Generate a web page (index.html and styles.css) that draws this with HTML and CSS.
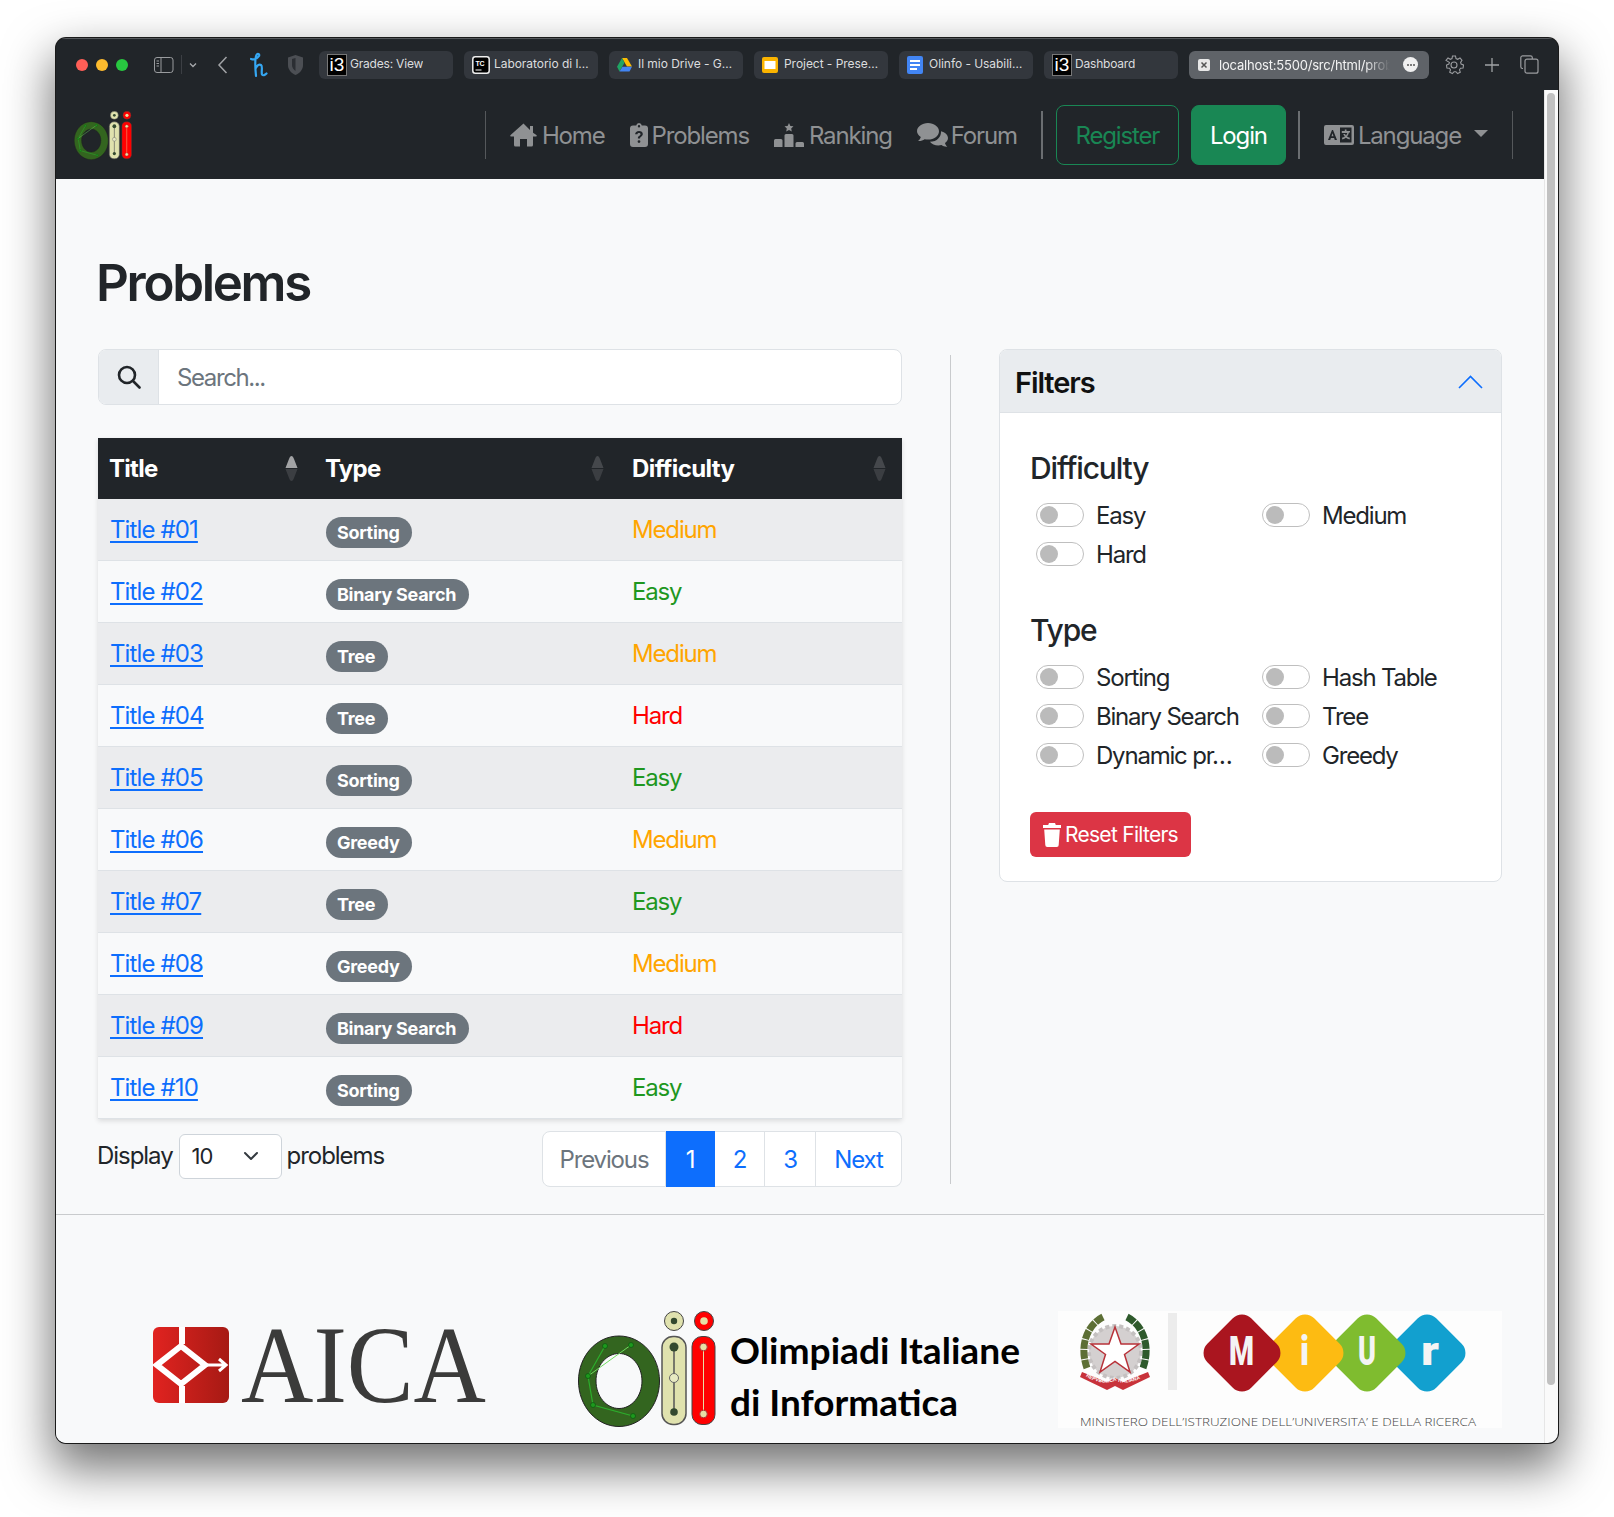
FILE: index.html
```html
<!DOCTYPE html>
<html lang="en">
<head>
<meta charset="utf-8">
<title>Problems</title>
<link rel="stylesheet" href="styles.css">
</head>
<body>
<svg class="defs" width="0" height="0">
  <symbol id="oii" viewBox="0 0 138 116">
    <path fill="#33651f" stroke="#222" fill-rule="evenodd" d="M41 25C18.500 25 .500 45 .500 70s18 45.500 40.500 45.500S81.500 95 81.500 70 63.500 25 41 25zM41 42.500c12.700 0 23 12.300 23 27.500S53.700 97.500 41 97.500 18 85.200 18 70s10.300-27.500 23-27.500z"/>
    <path fill="none" stroke="#2cae2c" stroke-width="1.200" d="M27 35 10 65l5 29 40 11"/>
    <path fill="none" stroke="#6fdc5f" stroke-width="1" d="M10 65 53 34"/>
    <g fill="#1d9a1d" stroke="#0f5a12" stroke-width=".8"><circle cx="27" cy="35" r="2.500"/><circle cx="53" cy="34" r="2.500"/><circle cx="10" cy="65" r="2.500"/><circle cx="15" cy="94" r="2.500"/><circle cx="55" cy="105" r="2.500"/></g>
    <circle cx="96" cy="10" r="9.500" fill="#e0e2ae" stroke="#444"/><circle cx="96" cy="10" r="3.200" fill="#33492f"/>
    <rect x="84" y="25.500" width="24" height="88" rx="11" fill="#e0e2ae" stroke="#555" stroke-width="1.500"/>
    <path stroke="#555" stroke-width="1.500" d="M96 36v65"/>
    <circle cx="96" cy="36" r="4.500" fill="#33492f"/><circle cx="96" cy="67" r="4.500" fill="#e8eac2" stroke="#666"/><circle cx="96" cy="101" r="3.800" fill="#33492f"/>
    <circle cx="126" cy="10" r="9.500" fill="#f00" stroke="#444"/><circle cx="126" cy="10" r="3.800" fill="#e6dfa6"/>
    <rect x="114" y="25.500" width="23" height="88" rx="10" fill="#f00" stroke="#444" stroke-width="1"/>
    <path stroke="#e6dfa6" stroke-width="1" d="M125.500 36v67"/>
    <circle cx="125.500" cy="36" r="3.800" fill="#e6dfa6" stroke="#a33"/><circle cx="125.500" cy="103" r="3.800" fill="#e6dfa6" stroke="#a33"/>
  </symbol>
  <symbol id="sort" viewBox="0 0 13 25">
    <path d="M6.500 0C7.500 0 8.300 1 9 3l3.500 9H.5L4 3C4.700 1 5.500 0 6.500 0z"/>
  </symbol>
  <linearGradient id="aicared" x1="0" x2="1" y1="0" y2="0"><stop offset="0" stop-color="#e12320"/><stop offset="1" stop-color="#a61a14"/></linearGradient>
</svg>

<div class="desktop">
  <div class="window">
    <header class="toolbar">
      <div class="lights"><span class="light light-red"></span><span class="light light-yellow"></span><span class="light light-green"></span></div>
      <svg class="tb-sidebar" width="20" height="16" viewBox="0 0 20 16" fill="none" stroke="#9a9c9f"><rect x=".5" y=".5" width="18.500" height="15" rx="2.500"/><path d="M7 .5v15M2.500 4h2.500M2.500 6.500h2.500M2.500 9h2.500" /></svg>
      <span class="tb-sep"></span>
      <svg class="tb-chev" width="8" height="6" viewBox="0 0 8 6" fill="none" stroke="#a8aaad" stroke-width="1.300"><path d="M1 1.500 4 4.500l3-3"/></svg>
      <svg class="tb-back" width="11" height="18" viewBox="0 0 11 18" fill="none" stroke="#a0a2a5" stroke-width="1.500"><path d="M9.500 1 2 9l7.500 8"/></svg>
      <svg class="tb-h" width="18" height="26" viewBox="0 0 18 26" fill="none" stroke="#35a7f2" stroke-width="2.200" stroke-linecap="round"><path d="M1 7c3 1 6 0 8-3 .9-2-1.500-3-2.500-1C5 6 5 14 6 24M6 16c1-3 3.500-4 5-3 2 1.300 0 7 1 9.500 1 1.500 3 .5 4.500-1"/></svg>
      <svg class="tb-shield" width="15" height="20" viewBox="0 0 15 20"><path fill="#4c4f54" d="M7.500 0 15 2.500V10c0 4.500-3 8-7.500 10C3 18 0 14.500 0 10V2.500z"/><path fill="#2b2e33" d="M7.500 3 4 4v6c0 2.500 1.500 4.500 3.500 6z"/></svg>
      <div class="tabs">
        <div class="tab"><span class="fav-i3">i3</span><span class="tab-text">Grades: View</span></div>
        <div class="tab"><svg class="fav" width="18" height="18" viewBox="0 0 18 18"><rect x=".8" y=".8" width="16.400" height="16.400" rx="2.500" fill="#000" stroke="#eee" stroke-width="1.500"/><text x="3.500" y="9.500" class="tc-text">TC</text><path stroke="#fff" d="M3.500 14h6"/></svg><span class="tab-text tab-text-wide tab-text-lab">Laboratorio di l…</span></div>
        <div class="tab"><svg class="fav" width="15" height="14" viewBox="0 0 15 14"><path fill="#fbbc04" d="M5 0h5l5 8.500h-5z"/><path fill="#1fa463" d="M5 0 0 8.800l2.500 4.700 5-8.700z"/><path fill="#4285f4" d="M5.500 8.800H15l-2.500 4.700h-10z"/></svg><span class="tab-text tab-text-wide">Il mio Drive - G…</span></div>
        <div class="tab"><svg class="fav" width="16" height="16" viewBox="0 0 16 16"><rect width="16" height="16" rx="2" fill="#fbb400"/><rect x="2.500" y="4" width="11" height="8" fill="#fff"/></svg><span class="tab-text tab-text-wide">Project - Prese…</span></div>
        <div class="tab"><svg class="fav" width="16" height="18" viewBox="0 0 16 18"><rect width="16" height="18" rx="2" fill="#4285f4"/><path stroke="#fff" stroke-width="1.800" d="M3 5h10M3 9h10M3 13h7"/></svg><span class="tab-text tab-text-wide">Olinfo - Usabili…</span></div>
        <div class="tab"><span class="fav-i3">i3</span><span class="tab-text">Dashboard</span></div>
        <div class="tab tab-active">
          <svg class="fav-x" width="12" height="12" viewBox="0 0 12 12"><rect width="12" height="12" rx="2" fill="#e8e8e8"/><path stroke="#555" stroke-width="1.500" d="M3.500 3.500l5 5M8.500 3.500l-5 5"/></svg>
          <span class="url">localhost:5500/src/html/prob</span>
          <span class="url-more"><i></i><i></i><i></i></span>
        </div>
      </div>
      <svg class="tb-gear" width="20" height="20" viewBox="0 0 20 20" fill="none" stroke="#9a9c9f" stroke-width="1.100"><circle cx="10" cy="10" r="3"/><path d="M8.500 1h3l.5 2.500 1.700.8L16 3l2 2.400-1.400 2 .5 1.600 2.400 1-.4 3-2.600.3-1 1.500.8 2.400-2.700 1.400-1.700-1.900h-1.800l-1.700 1.900-2.700-1.400.8-2.400-1-1.500-2.600-.3-.4-3 2.400-1 .5-1.600L2 5.400 4 3l2.300 1.300 1.700-.8z"/></svg>
      <svg class="tb-plus" width="14" height="14" viewBox="0 0 14 14" stroke="#a0a2a5" stroke-width="1.300"><path d="M7 0v14M0 7h14"/></svg>
      <svg class="tb-copy" width="19" height="19" viewBox="0 0 19 19" fill="none" stroke="#9a9c9f" stroke-width="1.200"><path d="M3 13.500H2.500A1.800 1.800 0 0 1 .8 11.700V2.500A1.800 1.800 0 0 1 2.500.8h8A1.800 1.800 0 0 1 12.300 2.500V4"/><rect x="5" y="4.200" width="13" height="14" rx="2"/></svg>
    </header>

    <div class="viewport">
      <div class="page">
        <nav class="navbar">
          <svg class="nav-logo" width="58" height="49"><use href="#oii"/></svg>
          <div class="nav-right">
            <span class="nav-div"></span>
            <a class="nav-link" href="#"><svg width="27" height="24" viewBox="0 0 27 24"><path d="M13.500 .5.600 12c-.8.700-.3 1.600.6 1.600H4V22a1.500 1.500 0 0 0 1.500 1.500H10V16h7v7.500h4.500A1.500 1.500 0 0 0 23 22v-8.400h2.800c.9 0 1.400-.9.600-1.600L23 9.700V3h-3v4z"/></svg>Home</a>
            <a class="nav-link nav-problems" href="#"><svg width="18" height="24" viewBox="0 0 18 24"><path fill-rule="evenodd" d="M9 0a3 3 0 0 1 2.800 2.500H15a3 3 0 0 1 3 3V21a3 3 0 0 1-3 3H3a3 3 0 0 1-3-3V5.500a3 3 0 0 1 3-3h3.200A3 3 0 0 1 9 0zM9 2a1.200 1.200 0 1 0 0 2.400A1.200 1.200 0 0 0 9 2zM9 8c-2.300 0-3.800 1.300-3.900 3.300h2.300c.1-.8.700-1.300 1.600-1.300s1.500.5 1.500 1.200c0 .7-.4 1-1.200 1.500-.9.600-1.400 1.200-1.400 2.200v.6h2.200v-.4c0-.6.300-.9 1.100-1.400.9-.6 1.600-1.300 1.600-2.600C12.800 9.300 11.300 8 9 8zM9 17.200a1.400 1.400 0 1 0 0 2.800 1.400 1.400 0 0 0 0-2.800z"/></svg>Problems</a>
            <a class="nav-link" href="#"><svg width="30" height="24" viewBox="0 0 30 24"><path d="M15 0l1.400 2.900 3.100.4-2.300 2.200.6 3.100L15 7.100l-2.800 1.500.6-3.100-2.300-2.200 3.100-.4zM12 11h6a1.500 1.500 0 0 1 1.500 1.500V24h-9V12.500A1.500 1.500 0 0 1 12 11zM1.500 16H7a1.500 1.500 0 0 1 1.500 1.500V24H0v-6.500A1.500 1.500 0 0 1 1.500 16zM23 19h5.500a1.500 1.500 0 0 1 1.500 1.500V24h-8.500v-3.500A1.500 1.500 0 0 1 23 19z"/></svg>Ranking</a>
            <a class="nav-link nav-forum" href="#"><svg width="31" height="24" viewBox="0 0 31 24"><path d="M11 0c6 0 11 3.700 11 8.300s-5 8.300-11 8.300c-1.200 0-2.300-.1-3.400-.4C5.900 17.400 3.800 18.200 1 18c1.300-1 2.500-2.600 2.800-4C1.400 12.500 0 10.500 0 8.300 0 3.700 5 0 11 0z"/><path d="M24 8.200c4 1 7 3.700 7 6.900 0 2-1.200 3.800-3 5 .2 1.300 1.200 2.800 2.300 3.700-2.300.2-4.300-.5-5.800-1.700-1 .2-2 .4-3.100.4-3.600 0-6.800-1.500-8.500-3.700 7.200-.1 11.500-5 11.100-10.600z"/></svg>Forum</a>
            <span class="nav-div nav-div-strong"></span>
            <a class="btn-register" href="#">Register</a>
            <a class="btn-login" href="#">Login</a>
            <span class="nav-div nav-div-strong"></span>
            <a class="nav-link nav-lang" href="#"><svg width="30" height="20" viewBox="0 0 30 20"><path fill-rule="evenodd" d="M2 0h26a2 2 0 0 1 2 2v16a2 2 0 0 1-2 2H2a2 2 0 0 1-2-2V2a2 2 0 0 1 2-2zM16 2.500v15h11.500v-15zM8 5 4 15h2.200l.7-2h3.200l.7 2h2.200L9 5zM8.500 8.300l1 3h-2z"/><path fill-rule="evenodd" d="M20.800 4.500h1.700V6h3.500v1.600h-1c-.4 1.700-1.100 3-2 4 .8.500 1.800.9 3 1.200l-.5 1.600c-1.400-.4-2.600-.9-3.600-1.600-1 .7-2.100 1.200-3.500 1.600l-.5-1.600c1.200-.3 2.200-.7 3-1.200-.7-.7-1.300-1.500-1.700-2.500h1.800c.3.500.6 1 1 1.400.6-.7 1-1.500 1.300-2.500H17.800V6h3z"/></svg>Language<span class="caret"></span></a>
            <span class="nav-div"></span>
          </div>
        </nav>

        <main class="main">
          <h1 class="title">Problems</h1>
          <div class="columns">
            <section class="left">
              <div class="search">
                <span class="search-addon"><svg width="24" height="24" viewBox="0 0 24 24" fill="none" stroke="#212529" stroke-width="2.600" stroke-linecap="round"><circle cx="10" cy="10" r="8"/><path d="m16 16 6.500 6.500"/></svg></span>
                <span class="search-input">Search...</span>
              </div>
              <table class="table">
                <colgroup><col class="col-title"><col class="col-type"><col class="col-diff"></colgroup>
                <thead>
                  <tr>
                    <th><div class="th-in">Title<svg class="sort" width="13" height="25"><use href="#sort" class="sort-active"/><use href="#sort" class="sort-down"/></svg></div></th>
                    <th><div class="th-in">Type<svg class="sort" width="13" height="25"><use href="#sort" class="sort-up"/><use href="#sort" class="sort-down"/></svg></div></th>
                    <th><div class="th-in th-diff">Difficulty<svg class="sort" width="13" height="25"><use href="#sort" class="sort-up"/><use href="#sort" class="sort-down"/></svg></div></th>
                  </tr>
                </thead>
                <tbody>
                  <tr><td><a href="#">Title #01</a></td><td><span class="badge">Sorting</span></td><td class="medium">Medium</td></tr>
                  <tr><td><a href="#">Title #02</a></td><td><span class="badge">Binary Search</span></td><td class="easy">Easy</td></tr>
                  <tr><td><a href="#">Title #03</a></td><td><span class="badge">Tree</span></td><td class="medium">Medium</td></tr>
                  <tr><td><a href="#">Title #04</a></td><td><span class="badge">Tree</span></td><td class="hard">Hard</td></tr>
                  <tr><td><a href="#">Title #05</a></td><td><span class="badge">Sorting</span></td><td class="easy">Easy</td></tr>
                  <tr><td><a href="#">Title #06</a></td><td><span class="badge">Greedy</span></td><td class="medium">Medium</td></tr>
                  <tr><td><a href="#">Title #07</a></td><td><span class="badge">Tree</span></td><td class="easy">Easy</td></tr>
                  <tr><td><a href="#">Title #08</a></td><td><span class="badge">Greedy</span></td><td class="medium">Medium</td></tr>
                  <tr><td><a href="#">Title #09</a></td><td><span class="badge">Binary Search</span></td><td class="hard">Hard</td></tr>
                  <tr><td><a href="#">Title #10</a></td><td><span class="badge">Sorting</span></td><td class="easy">Easy</td></tr>
                </tbody>
              </table>
              <div class="table-foot">
                <div class="display">
                  <span class="display-text">Display</span>
                  <span class="select">10<svg width="16" height="10" viewBox="0 0 16 10" fill="none" stroke="#343a40" stroke-width="2" stroke-linecap="round" stroke-linejoin="round"><path d="m2 2 6 6 6-6"/></svg></span>
                  <span class="display-text">problems</span>
                </div>
                <div class="pagination">
                  <a class="page-item page-prev" href="#">Previous</a>
                  <a class="page-item page-active" href="#">1</a>
                  <a class="page-item page-2" href="#">2</a>
                  <a class="page-item page-3" href="#">3</a>
                  <a class="page-item page-next" href="#">Next</a>
                </div>
              </div>
            </section>
            <div class="vline"></div>
            <aside class="filters">
              <div class="filters-head">
                <span class="filters-label">Filters</span>
                <svg width="25" height="14" viewBox="0 0 25 14" fill="none" stroke="#0d6efd" stroke-width="1.600"><path d="M1 13 12.500 1.500 24 13"/></svg>
              </div>
              <div class="filters-body">
                <h5 class="filter-title">Difficulty</h5>
                <div class="options">
                  <label class="option"><span class="toggle"></span>Easy</label>
                  <label class="option"><span class="toggle"></span>Medium</label>
                  <label class="option"><span class="toggle"></span>Hard</label>
                </div>
                <h5 class="filter-title filter-title-2">Type</h5>
                <div class="options">
                  <label class="option"><span class="toggle"></span>Sorting</label>
                  <label class="option"><span class="toggle"></span>Hash Table</label>
                  <label class="option"><span class="toggle"></span>Binary Search</label>
                  <label class="option"><span class="toggle"></span>Tree</label>
                  <label class="option"><span class="toggle"></span>Dynamic pr…</label>
                  <label class="option"><span class="toggle"></span>Greedy</label>
                </div>
                <a class="btn-reset" href="#"><svg width="18" height="24" viewBox="0 0 18 24" fill="#fff"><path d="M6 0h6l.8 2H18v3H0V2h5.200zM1.200 6.500h15.600L15.700 22a2 2 0 0 1-2 2H4.300a2 2 0 0 1-2-2z"/></svg>Reset Filters</a>
              </div>
            </aside>
          </div>
        </main>

        <footer class="footer">
          <svg class="logo-aica" width="336" height="128" viewBox="0 -24 336 128">
            <rect x="0" y="2" width="76" height="76" rx="6" fill="url(#aicared)"/>
            <path fill="none" stroke="#fff" stroke-width="6" d="M28 21 4 40l24 19 24-19z"/>
            <path fill="none" stroke="#fff" stroke-width="6" d="M29 2v17M29 61v17"/>
            <path fill="none" stroke="#fff" stroke-width="3" d="M50 40h22M66 34l7 6-7 6"/>
            <text x="88" y="77" class="aica-text" textLength="245" lengthAdjust="spacingAndGlyphs">AICA</text>
          </svg>
          <svg class="logo-oii" width="444" height="118" viewBox="0 0 444 118">
            <use href="#oii" width="138" height="116"/>
            <text x="152" y="53" class="oii-text" textLength="290" lengthAdjust="spacingAndGlyphs">Olimpiadi Italiane</text>
            <text x="152" y="105" class="oii-text" textLength="228" lengthAdjust="spacingAndGlyphs">di Informatica</text>
          </svg>
          <svg class="logo-miur" width="444" height="117" viewBox="0 0 444 117">
            <rect width="444" height="117" fill="#fdfdfd"/>
            <g transform="translate(57 41)">
              <circle r="26" fill="#d4d0d0" stroke="#c4c0c0" stroke-width="4" stroke-dasharray="4 3"/>
              <path fill="#fff" stroke="#b8333a" stroke-width="1.500" d="M0-25 6-8h18L9.500 2.500 15 20 0 9.500-15 20l5.500-17.500L-24-8h18z"/>
              <path fill="none" stroke="#5d6f35" stroke-width="7" stroke-dasharray="9 1" d="M-12-35C-28-27-36-6-28 16"/>
              <path fill="none" stroke="#2f5a2c" stroke-width="7" stroke-dasharray="9 1" d="M12-35C28-27 36-6 28 16"/>
              <path fill="#c8323a" d="M-33 20-8 30 0 26 8 30 33 20 35 25 8 38 0 34-8 38-35 25z"/>
              <path id="rib" fill="none" d="M-31 23Q-15 34 0 29Q15 34 31 23"/>
              <text class="rib-text"><textPath href="#rib" startOffset="2">REPVBBLICA ITALIANA</textPath></text>
            </g>
            <rect x="110" y="2" width="9" height="77" fill="#ececec"/>
            <g>
              <rect x="-31" y="-31" width="62" height="62" rx="13" transform="translate(369 42) rotate(45)" fill="#12a0cf"/>
              <rect x="-31" y="-31" width="62" height="62" rx="13" transform="translate(309 42) rotate(45)" fill="#7fbc2f"/>
              <rect x="-31" y="-31" width="62" height="62" rx="13" transform="translate(247 42) rotate(45)" fill="#fdbb12"/>
              <rect x="-31" y="-31" width="62" height="62" rx="13" transform="translate(184 42) rotate(45)" fill="#aa151f"/>
            </g>
            <text x="171" y="54" class="miur-l" textLength="25" lengthAdjust="spacingAndGlyphs">M</text>
            <text x="242" y="54" class="miur-l" textLength="9" lengthAdjust="spacingAndGlyphs">i</text>
            <text x="300" y="54" class="miur-l" textLength="18" lengthAdjust="spacingAndGlyphs">U</text>
            <text x="363" y="54" class="miur-l" textLength="18" lengthAdjust="spacingAndGlyphs">r</text>
            <text x="22" y="115" class="miur-t" textLength="396" lengthAdjust="spacingAndGlyphs">MINISTERO DELL’ISTRUZIONE DELL’UNIVERSITA’ E DELLA RICERCA</text>
          </svg>
        </footer>
      </div>
      <div class="scrollbar"><span class="scroll-thumb"></span></div>
    </div>
  </div>
</div>
</body>
</html>
```

FILE: styles.css
```css
* { box-sizing: border-box; }
html, body { margin: 0; padding: 0; }
body {
  background: #fff;
  font-family: Inter, "Liberation Sans", sans-serif;
  color: #212529;
  width: 1614px;
  height: 1517px;
  overflow: hidden;
}
a { text-decoration: none; }
.defs { position: absolute; }

.desktop { padding: 38px 56px 74px; height: 1517px; }
.window {
  height: 1405px;
  border-radius: 10px;
  overflow: hidden;
  background: #212529;
  display: flex;
  flex-direction: column;
  box-shadow: 0 0 0 1px #1a1a1a, 0 22px 48px 4px rgba(0, 0, 0, .55);
}

/* browser toolbar */
.toolbar {
  height: 52px;
  flex: none;
  display: flex;
  align-items: center;
  background: #212529;
  padding: 0 0 0 20px;
  border-top: 1px solid #55585c;
}
.lights { display: flex; gap: 8px; }
.light { width: 12px; height: 12px; border-radius: 50%; }
.light-red { background: #ff5f57; }
.light-yellow { background: #febc2e; }
.light-green { background: #28c840; }
.tb-sidebar { margin-left: 26px; }
.tb-sep { width: 1px; height: 19px; background: #3c3f44; margin-left: 7px; }
.tb-chev { margin-left: 7px; }
.tb-back { margin-left: 20px; }
.tb-h { margin-left: 22px; }
.tb-shield { margin-left: 20px; }
.tabs { display: flex; gap: 11px; margin-left: 16px; }
.tab {
  width: 134px;
  height: 28px;
  background: #33373d;
  border-radius: 6px;
  display: flex;
  align-items: center;
  padding-left: 8px;
  gap: 3px;
  color: #dcdddf;
  font-size: 12px;
  letter-spacing: -.2px;
  white-space: nowrap;
}
.fav { flex: none; }
.fav-i3 {
  flex: none;
  width: 20px;
  height: 22px;
  background: #000;
  border: 1px solid #777;
  color: #fff;
  font-family: "Liberation Sans", sans-serif;
  font-size: 19px;
  line-height: 20px;
  letter-spacing: 0;
  text-align: center;
  overflow: hidden;
}
.tab-text { overflow: hidden; padding-bottom: 2px; }
.tab-text-wide { margin-left: 3px; letter-spacing: -.05px; }
.tab-text-lab { margin-left: 1px; }
.tc-text { font: 700 7px "Liberation Sans", sans-serif; fill: #fff; }
.tab-active {
  width: 240px;
  background: #5f6368;
  color: #f3f3f3;
  font-size: 13px;
  padding-left: 9px;
  gap: 0;
  letter-spacing: -.2px;
}
.fav-x { flex: none; }
.url {
  margin-left: 9px;
  width: 178px;
  overflow: hidden;
  -webkit-mask-image: linear-gradient(90deg, #000 82%, transparent 96%);
  mask-image: linear-gradient(90deg, #000 82%, transparent 96%);
}
.url-more {
  margin-left: 6px;
  width: 15px;
  height: 15px;
  border-radius: 50%;
  background: #f0f0f0;
  display: flex;
  align-items: center;
  justify-content: center;
  gap: 1px;
}
.url-more i { width: 2px; height: 2px; border-radius: 50%; background: #555; }
.tb-gear { margin-left: 15px; }
.tb-plus { margin-left: 21px; }
.tb-copy { margin-left: 21px; }

.viewport { flex: 1; display: flex; min-height: 0; }
.page { width: 1488px; flex: none; background: #f8f9fa; display: flex; flex-direction: column; }
.scrollbar { width: 14px; flex: none; background: #fafafa; border-left: 1px solid #e6e6e6; padding: 3px 3px 0 2px; }
.scroll-thumb { display: block; height: 1292px; background: #c1c1c1; border-radius: 4px; }

/* navbar */
.navbar {
  height: 89px;
  flex: none;
  display: flex;
  align-items: center;
  background: #212529;
  padding-left: 18px;
  padding-right: 31px;
}
.nav-logo { margin-top: 2px; }
.nav-right { margin-left: auto; display: flex; align-items: center; font-size: 24px; letter-spacing: -1.15px; }
.nav-div { width: 1px; height: 48px; background: #55585b; }
.nav-div-strong { background: #6b6e71; width: 2px; }
.nav-link { display: flex; align-items: center; gap: 5px; padding: 3px 13px 0 12px; color: #8f9193; line-height: 36px; }
.nav-link svg { fill: #8f9193; flex: none; margin-top: -3px; }
.nav-right > .nav-div + .nav-link { margin-left: 12px; }
.nav-link + .nav-div { margin-left: 11px; }
.nav-problems { gap: 4px; }
.nav-forum { gap: 3px; }
.btn-register, .btn-login {
  height: 60px;
  padding-top: 2px;
  border-radius: 8px;
  display: flex;
  align-items: center;
  justify-content: center;
  border: 1px solid #198754;
  margin-left: 12px;
}
.btn-register { width: 123px; color: #198754; margin-left: 13px; }
.btn-login { width: 95px; background: #198754; color: #fff; }
.btn-login + .nav-div { margin-left: 12px; }
.nav-lang { gap: 4px; }
.caret { width: 0; height: 0; border-style: solid; border-width: 7px 7px 0; border-color: #8f9193 transparent transparent; margin-left: 9px; margin-top: -6px; }

/* main */
.main { padding: 68px 42px 27px 42px; flex: none; border-bottom: 1px solid #c9cbcd; }
.title { margin: 0 0 30px -2px; font-size: 51px; line-height: 72px; font-weight: 600; letter-spacing: -2.3px; }
.columns { display: flex; }
.left { width: 804px; flex: none; font-size: 24px; letter-spacing: -1.05px; }
.vline { width: 1px; flex: none; background: #c9cbcd; margin: 6px 48px 3px; }

.search { height: 56px; display: flex; border: 1px solid #dee2e6; border-radius: 8px; overflow: hidden; background: #fff; }
.search-addon { width: 60px; flex: none; background: #e9ecef; border-right: 1px solid #dee2e6; display: flex; align-items: center; justify-content: center; }
.search-input { padding-left: 18px; display: flex; align-items: center; color: #6c757d; letter-spacing: -1.4px; }

.table { width: 804px; margin-top: 33px; border-collapse: collapse; table-layout: fixed; box-shadow: 0 2px 5px rgba(0, 0, 0, .12); }
.col-title { width: 216px; }
.col-type { width: 306px; }
.col-diff { width: 282px; }
.table th { height: 61px; background: #212529; color: #fff; font-weight: 700; padding: 0 16px 0 11px; text-align: left; letter-spacing: -.7px; }
.th-in { display: flex; align-items: center; justify-content: space-between; }
.th-diff { letter-spacing: -.6px; padding-left: 1px; }
.sort { fill: #45484c; overflow: visible; }
.sort-active { fill: #a2a3a5; }
.sort-down { transform: translateY(25px) scaleY(-1); fill: #3b3e42; }
.sort-up { fill: #45484c; }
.table td { height: 62px; padding: 0 12px; border-bottom: 1px solid #dee2e6; background: #f8f9fa; letter-spacing: -1.15px; }
.table tbody tr:first-child td { height: 61px; }
.table tbody tr:nth-child(odd) td { background: #ebecee; }
.table a { color: #0d6efd; text-decoration: underline; text-underline-offset: 3px; letter-spacing: -.88px; }
.badge {
  display: inline-block;
  height: 31px;
  line-height: 31px;
  margin-top: 7px;
  padding: 0 13px 0 11px;
  border-radius: 16px;
  background: #6c757d;
  color: #fff;
  font-size: 18px;
  font-weight: 700;
  letter-spacing: -.3px;
  vertical-align: middle;
}
.medium { color: #ffa500; }
.easy { color: #1f971f; }
.hard { color: #f00; }

.table-foot { display: flex; justify-content: space-between; align-items: center; margin-top: 12px; }
.display { display: flex; align-items: center; gap: 6px; margin: -5px 0 0 -1px; }
.display-text { margin-top: -2px; }
.display-text:last-child { margin-left: -1px; }
.select {
  width: 103px;
  height: 45px;
  border: 1px solid #ced4da;
  border-radius: 6px;
  background: #fff;
  display: flex;
  align-items: center;
  justify-content: space-between;
  padding: 0 22px 0 12px;
  font-size: 22px;
}
.pagination { display: flex; height: 56px; letter-spacing: -1.15px; }
.page-item { display: flex; align-items: center; justify-content: center; padding-top: 2px; background: #fff; color: #0d6efd; border: 1px solid #dee2e6; border-left: 0; }
.page-prev { width: 124px; color: #6c757d; border-left: 1px solid #dee2e6; border-radius: 8px 0 0 8px; }
.page-active { width: 49px; background: #0d6efd; color: #fff; border-color: #0d6efd; }
.page-2 { width: 50px; }
.page-3 { width: 51px; }
.page-next { width: 86px; border-radius: 0 8px 8px 0; }

/* filters */
.filters { flex: 1; align-self: flex-start; height: 533px; background: #fff; border: 1px solid #dee2e6; border-radius: 8px; overflow: hidden; font-size: 24px; letter-spacing: -1.2px; }
.filters-head { height: 63px; background: #e9ecef; border-bottom: 1px solid #dee2e6; display: flex; align-items: center; justify-content: space-between; padding: 2px 18px 0 15px; font-size: 29px; font-weight: 600; color: #111; letter-spacing: -1.1px; }
.filters-body { padding: 37px 30px 0; }
.filter-title { margin: 0 0 17px; font-size: 30px; line-height: 36px; font-weight: 500; letter-spacing: -1.15px; }
.filter-title-2 { margin-top: 44px; }
.options { display: grid; grid-template-columns: 226px 1fr; row-gap: 13px; padding-left: 6px; }
.option { display: flex; align-items: flex-start; gap: 12px; height: 26px; line-height: 26px; white-space: nowrap; }
.toggle { width: 48px; height: 24px; flex: none; border: 1px solid #bfbfbf; border-radius: 12px; background: #fff; position: relative; }
.toggle::before { content: ""; position: absolute; left: 3px; top: 2px; width: 18px; height: 18px; border-radius: 50%; background: #bbb; }
.btn-reset { margin-top: 43px; width: 161px; height: 45px; background: #dc3545; color: #fff; border-radius: 6px; display: flex; align-items: center; gap: 4px; padding-left: 13px; font-size: 21px; letter-spacing: -.72px; }

/* footer */
.footer { flex: 1; display: flex; align-items: flex-start; padding: 96px 0 0 41px; overflow: hidden; background: #f8f9fa; }
.logo-aica { margin: -10px 0 0 56px; flex: none; }
.logo-oii { margin-left: 89px; flex: none; }
.logo-miur { margin-left: 36px; flex: none; }
.aica-text { font: 400 111px "Liberation Serif", serif; fill: #3b3b3a; }
.oii-text { font: 700 37px Lato, sans-serif; fill: #000; }
.rib-text { font: 700 5px "Liberation Sans", sans-serif; fill: #fff; }
.miur-l { font: 900 40px Roboto, sans-serif; fill: #f4f4f4; }
.miur-t { font: 300 11.500px "Open Sans", sans-serif; fill: #444; }
```
